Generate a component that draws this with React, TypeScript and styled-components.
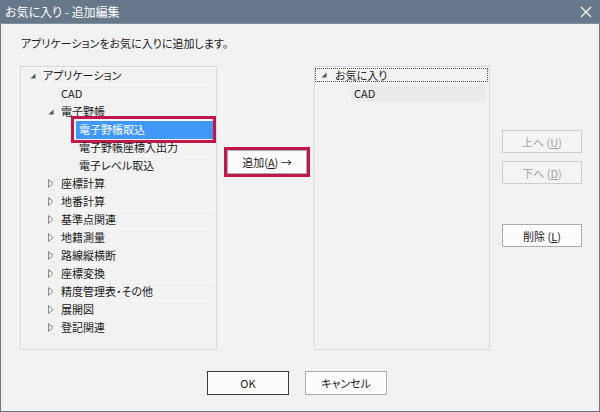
import React from 'react';
import styled, { createGlobalStyle } from 'styled-components';

const GlobalStyle = createGlobalStyle`
  html, body {
    margin: 0;
    padding: 0;
    background: #f2f2f2;
  }
  body {
    font-family: "Noto Sans CJK JP", "Noto Sans", sans-serif;
    font-size: 11px;
    font-feature-settings: "palt";
    color: #1a1a1a;
  }
`;

const Window = styled.div`
  width: 600px;
  height: 412px;
  box-sizing: border-box;
  border: 1px solid #67788a;
  border-top: none;
  display: flex;
  flex-direction: column;
  background: #f2f2f2;
`;

const TitleBar = styled.div`
  height: 24px;
  background: #67788a;
  border-bottom: 1px solid #8190a0;
  box-sizing: border-box;
  margin: 0 -1px;
  display: flex;
  align-items: center;
  justify-content: space-between;
  padding: 0 8px 0 5px;
  color: #ffffff;
  font-size: 12px;
`;

const CloseIcon = () => (
  <svg width="12" height="12" viewBox="0 0 12 12">
    <path d="M1 1 L11 11 M11 1 L1 11" stroke="#ffffff" strokeWidth="1.2" />
  </svg>
);

const Body = styled.div`
  flex: 1;
  display: flex;
  flex-direction: column;
  padding: 11px 0 0 19px;
`;

const Instruction = styled.div`
  height: 16px;
  line-height: 16px;
  margin-left: 1px;
`;

const Main = styled.div`
  display: flex;
  margin-top: 15px;
  height: 284px;
`;

const Panel = styled.div<{ $width: number }>`
  width: ${(p) => p.$width}px;
  box-sizing: border-box;
  border: 1px solid #d7d7d7;
  box-shadow: inset 1px 1px 0 #fbfbfb;
  background: #f2f2f2;
  position: relative;
`;

const Row = styled.div<{ $depth: number }>`
  height: 18px;
  display: flex;
  align-items: stretch;
  padding-left: ${(p) => p.$depth * 18}px;
  position: relative;
`;

const Expander = styled.div`
  width: 19px;
  flex-shrink: 0;
  display: flex;
  align-items: center;
  padding-left: 9px;
  padding-bottom: 1px;
  box-sizing: border-box;
`;

const Label = styled.div<{ $selected?: boolean; $shaded?: boolean }>`
  flex: 1;
  margin-right: 3px;
  padding-left: 3px;
  line-height: 17px;
  white-space: nowrap;
  border-bottom: 1px solid ${(p) => (p.$selected ? 'transparent' : '#f7f7f7')};
  box-sizing: border-box;
  background: ${(p) => (p.$selected ? '#3f97f6' : p.$shaded ? '#ebebeb' : 'transparent')};
  color: ${(p) => (p.$selected ? '#ffffff' : '#1a1a1a')};
`;

const FocusLabel = styled.div`
  flex: 1;
  margin: 1px 1px 3px 0;
  padding-left: 5px;
  line-height: 12px;
  border: 1px dotted #555555;
  display: flex;
  align-items: center;
  gap: 8px;
`;

const Highlight = styled.div`
  position: absolute;
  border: 3px solid #c0174d;
  pointer-events: none;
`;

const SelHighlight = styled(Highlight)`
  left: 50px;
  right: 0;
  top: -5px;
  bottom: -4px;
`;

const Middle = styled.div`
  width: 97px;
  display: flex;
  justify-content: flex-start;
  align-items: flex-start;
  padding-top: 84px;
  padding-left: 10px;
  box-sizing: border-box;
`;

const AddWrap = styled.div`
  position: relative;
`;

const AddHighlight = styled(Highlight)`
  left: -3px;
  right: -3px;
  top: -3px;
  bottom: -3px;
`;

const Button = styled.button<{ $disabled?: boolean; $default?: boolean; $w?: number; $h?: number }>`
  width: ${(p) => p.$w ?? 80}px;
  height: ${(p) => p.$h ?? 23}px;
  box-sizing: border-box;
  font-family: inherit;
  font-size: 11px;
  font-feature-settings: "palt";
  background: ${(p) => (p.$disabled ? '#f4f4f4' : '#fcfcfc')};
  border: 1px solid ${(p) => (p.$disabled ? '#cccccc' : p.$default ? '#3c3c3c' : '#adadad')};
  color: ${(p) => (p.$disabled ? '#a3a3a3' : '#1a1a1a')};
  padding: 0;
  display: flex;
  align-items: center;
  justify-content: center;
  u {
    text-decoration-thickness: 1px;
    text-underline-offset: 1px;
  }
`;

const SideButtons = styled.div`
  display: flex;
  flex-direction: column;
  padding: 64px 0 0 12px;
  gap: 8px;
`;

const Spacer = styled.div`
  height: 24px;
`;

const Footer = styled.div`
  display: flex;
  justify-content: center;
  gap: 16px;
  margin: 21px 0 0 -25px;
`;

const ArrowDown = () => (
  <svg width="6" height="6" viewBox="0 0 6 6">
    <path d="M5.5 0.5 L5.5 5.5 L0.5 5.5 Z" fill="#555555" />
  </svg>
);

const ArrowRight = () => (
  <svg width="6" height="9" viewBox="0 0 6 9">
    <path d="M0.5 0.5 L5 4.5 L0.5 8.5 Z" fill="none" stroke="#8a8a8a" strokeWidth="1" />
  </svg>
);

type Node = { label: string; depth: number; expander?: 'open' | 'closed'; selected?: boolean };

const tree: Node[] = [
  { label: 'アプリケーション', depth: 0, expander: 'open' },
  { label: 'CAD', depth: 1 },
  { label: '電子野帳', depth: 1, expander: 'open' },
  { label: '電子野帳取込', depth: 2, selected: true },
  { label: '電子野帳座標入出力', depth: 2 },
  { label: '電子レベル取込', depth: 2 },
  { label: '座標計算', depth: 1, expander: 'closed' },
  { label: '地番計算', depth: 1, expander: 'closed' },
  { label: '基準点関連', depth: 1, expander: 'closed' },
  { label: '地籍測量', depth: 1, expander: 'closed' },
  { label: '路線縦横断', depth: 1, expander: 'closed' },
  { label: '座標変換', depth: 1, expander: 'closed' },
  { label: '精度管理表・その他', depth: 1, expander: 'closed' },
  { label: '展開図', depth: 1, expander: 'closed' },
  { label: '登記関連', depth: 1, expander: 'closed' },
];

const App = () => (
  <>
    <GlobalStyle />
    <Window>
      <TitleBar>
        <span>お気に入り - 追加編集</span>
        <CloseIcon />
      </TitleBar>
      <Body>
        <Instruction>アプリケーションをお気に入りに追加します。</Instruction>
        <Main>
          <Panel $width={197}>
            {tree.map((n) => (
              <Row key={n.label} $depth={n.depth}>
                <Expander>
                  {n.expander === 'open' && <ArrowDown />}
                  {n.expander === 'closed' && <ArrowRight />}
                </Expander>
                <Label $selected={n.selected}>{n.label}</Label>
                {n.selected && <SelHighlight />}
              </Row>
            ))}
          </Panel>
          <Middle>
            <AddWrap>
              <Button $w={80} $h={24}>
                追加(<u>A</u>) →
              </Button>
              <AddHighlight />
            </AddWrap>
          </Middle>
          <Panel $width={176}>
            <Row $depth={0}>
              <FocusLabel>
                <ArrowDown />
                <span>お気に入り</span>
              </FocusLabel>
            </Row>
            <Row $depth={2}>
              <Label $shaded>CAD</Label>
            </Row>
          </Panel>
          <SideButtons>
            <Button $disabled>上へ (<u>U</u>)</Button>
            <Button $disabled>下へ (<u>D</u>)</Button>
            <Spacer />
            <Button>削除 (<u>L</u>)</Button>
          </SideButtons>
        </Main>
        <Footer>
          <Button $default $w={82} $h={24}>OK</Button>
          <Button $w={82} $h={24}>キャンセル</Button>
        </Footer>
      </Body>
    </Window>
  </>
);

export default App;
